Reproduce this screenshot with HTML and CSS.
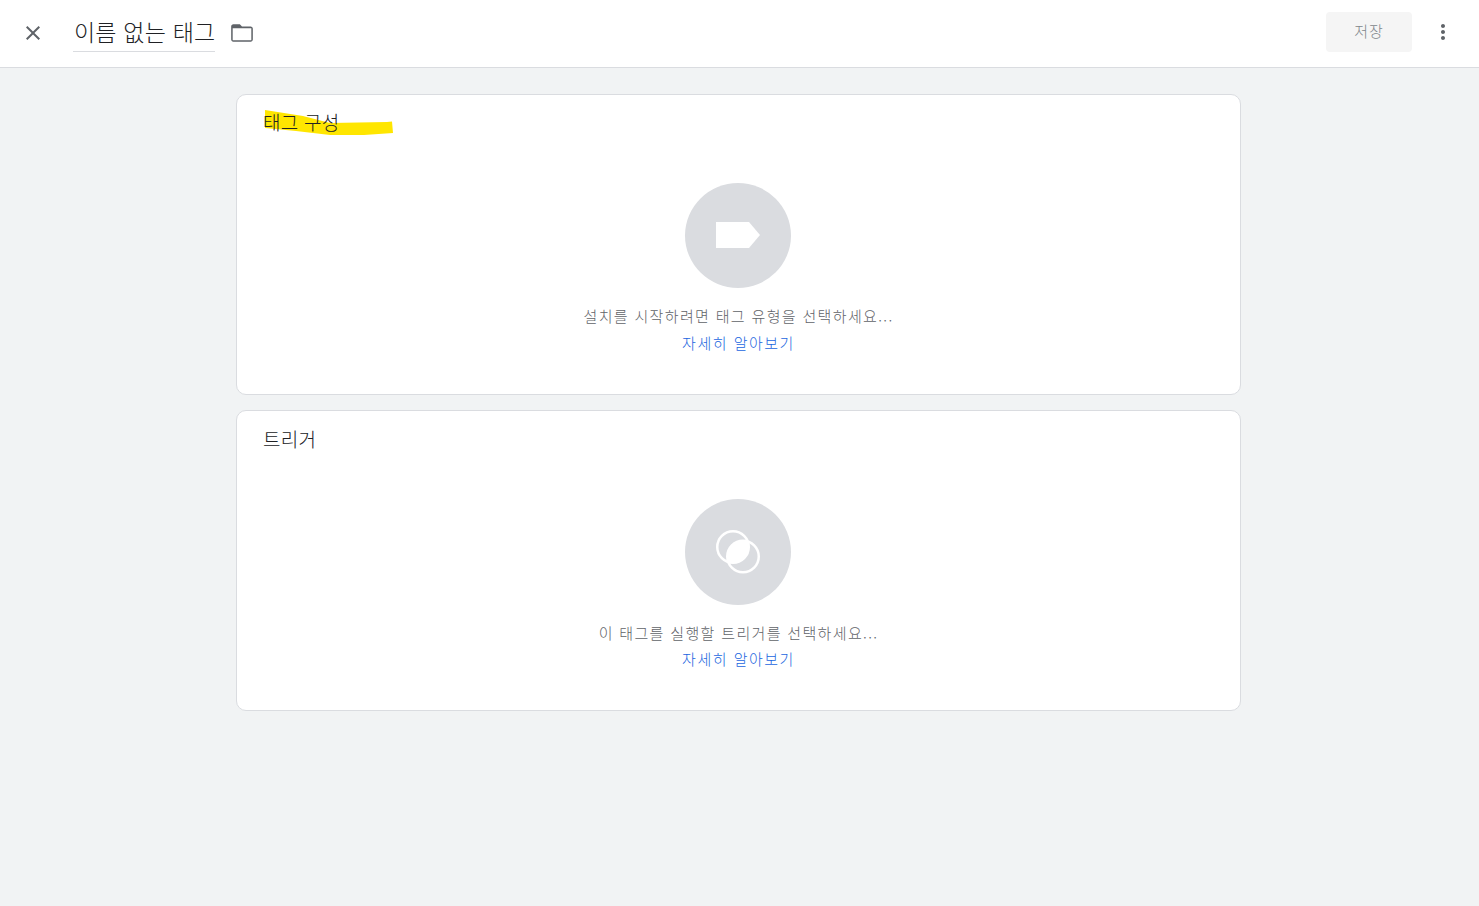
FILE: index.html
```html
<!DOCTYPE html>
<html lang="ko">
<head>
<meta charset="utf-8">
<title>이름 없는 태그</title>
<link rel="stylesheet" href="styles.css">
</head>
<body>
<header class="topbar">
  <div class="topbar-left">
    <button class="icon-btn close-btn" aria-label="닫기">
      <svg width="24" height="24" viewBox="0 0 24 24"><path fill="#5f6368" d="M19 6.41 17.59 5 12 10.59 6.41 5 5 6.41 10.59 12 5 17.59 6.41 19 12 13.41 17.59 19 19 17.59 13.41 12z"/></svg>
    </button>
    <div class="tag-name">이름 없는 태그</div>
    <svg class="folder" width="26" height="26" viewBox="0 0 24 24"><path fill="#5f6368" fill-rule="evenodd" d="M20 6h-8l-2-2H4c-1.100 0-2 .9-2 2v12c0 1.100.9 2 2 2h16c1.100 0 2-.9 2-2V8c0-1.100-.9-2-2-2zm.6 12.600H3.400V7.600h17.200z"/></svg>
  </div>
  <div class="topbar-right">
    <button class="save-btn">저장</button>
    <svg class="more" width="24" height="24" viewBox="0 0 24 24"><path fill="#5f6368" d="M12 8c1.100 0 2-.9 2-2s-.9-2-2-2-2 .9-2 2 .9 2 2 2zm0 2c-1.100 0-2 .9-2 2s.9 2 2 2 2-.9 2-2-.9-2-2-2zm0 6c-1.100 0-2 .9-2 2s.9 2 2 2 2-.9 2-2-.9-2-2-2z"/></svg>
  </div>
</header>
<main class="content">
  <section class="card">
    <h2 class="card-title">태그 구성</h2>
    <svg class="highlight" width="132" height="30" viewBox="0 0 132 30"><path fill="#ffe600" d="M1 1 L39 7 L66 14 L123 13 L128 12.500 L129 24 L100 26 L66 26 L32 22 L1 19z"/></svg>
    <div class="placeholder">
      <div class="badge badge-tag">
        <svg width="44" height="26" viewBox="0 0 44 26"><path fill="#fff" d="M0 0h33l11 13-11 13H0z"/></svg>
      </div>
      <p class="hint">설치를 시작하려면 태그 유형을 선택하세요...</p>
      <a class="learn" href="#">자세히 알아보기</a>
    </div>
  </section>
  <section class="card card-trigger">
    <h2 class="card-title">트리거</h2>
    <div class="placeholder">
      <div class="badge">
        <svg width="44" height="44" viewBox="0 0 44 44">
          <defs><clipPath id="lens"><circle cx="17" cy="17" r="16"/></clipPath></defs>
          <circle cx="27" cy="26.500" r="16" fill="#fff" clip-path="url(#lens)"/>
          <circle cx="17" cy="17" r="15.750" fill="none" stroke="#fff" stroke-width="2.500"/>
          <circle cx="27" cy="26.500" r="15.750" fill="none" stroke="#fff" stroke-width="2.500"/>
        </svg>
      </div>
      <p class="hint">이 태그를 실행할 트리거를 선택하세요...</p>
      <a class="learn" href="#">자세히 알아보기</a>
    </div>
  </section>
</main>
</body>
</html>
```
FILE: styles.css
```css
* { box-sizing: border-box; }
html, body { height: 100%; }
body {
  margin: 0;
  background: #f1f3f4;
  font-family: "Noto Sans CJK KR", "Noto Sans", sans-serif;
  font-weight: 300;
  color: #202124;
}
.topbar {
  height: 68px;
  background: #fff;
  border-bottom: 1px solid #dadce0;
  display: flex;
  align-items: center;
  justify-content: space-between;
  padding: 0 24px 3px 21px;
}
.topbar-left, .topbar-right { display: flex; align-items: center; }
.icon-btn { border: 0; background: none; padding: 0; width: 24px; height: 24px; }
.close-btn { margin-right: 28px; margin-top: 2px; }
.tag-name {
  font-size: 23px;
  line-height: 36px;
  height: 39px;
  margin-top: 1px;
  padding: 0 0 0 1px;
  width: 142px;
  white-space: nowrap;
  border-bottom: 1px solid #dadce0;
  letter-spacing: .2px;
}
.folder { margin-left: 14px; margin-top: 2px; }
.save-btn {
  width: 86px;
  height: 40px;
  border: 0;
  border-radius: 4px;
  background: #f5f5f5;
  color: #80868b;
  font: inherit;
  font-size: 15px;
  letter-spacing: 1px;
  padding: 0 0 3px;
}
.more { margin-left: 19px; }
.content {
  width: 1005px;
  margin-left: 236px;
  padding-top: 26px;
  display: flex;
  flex-direction: column;
  gap: 15px;
}
.card {
  position: relative;
  height: 301px;
  background: #fff;
  border: 1px solid #dadce0;
  border-radius: 10px;
  padding: 14px 26px;
}
.card-title {
  position: relative;
  z-index: 1;
  margin: 0;
  font-size: 19px;
  line-height: 26px;
  font-weight: 300;
  height: 26px;
  letter-spacing: .25px;
}
.card-trigger .card-title { top: 1px; }
.highlight { position: absolute; left: 27px; top: 14px; }
.placeholder {
  display: flex;
  flex-direction: column;
  align-items: center;
  margin-top: 48px;
}
.badge {
  width: 106px;
  height: 106px;
  margin-right: 1px;
  border-radius: 50%;
  background: #dadce0;
  display: flex;
  align-items: center;
  justify-content: center;
}
.badge-tag { height: 105px; margin-bottom: 1px; padding-bottom: 1px; }
.hint {
  margin: 16px 0 0;
  font-size: 15px;
  line-height: 22px;
  letter-spacing: 1.34px;
  color: #5f6368;
}
.card-trigger .hint { margin: 17px 0 -1px; }
.learn {
  margin-top: 5px;
  font-size: 15px;
  line-height: 22px;
  letter-spacing: 1.5px;
  color: #1a66e0;
  text-decoration: none;
}
```
